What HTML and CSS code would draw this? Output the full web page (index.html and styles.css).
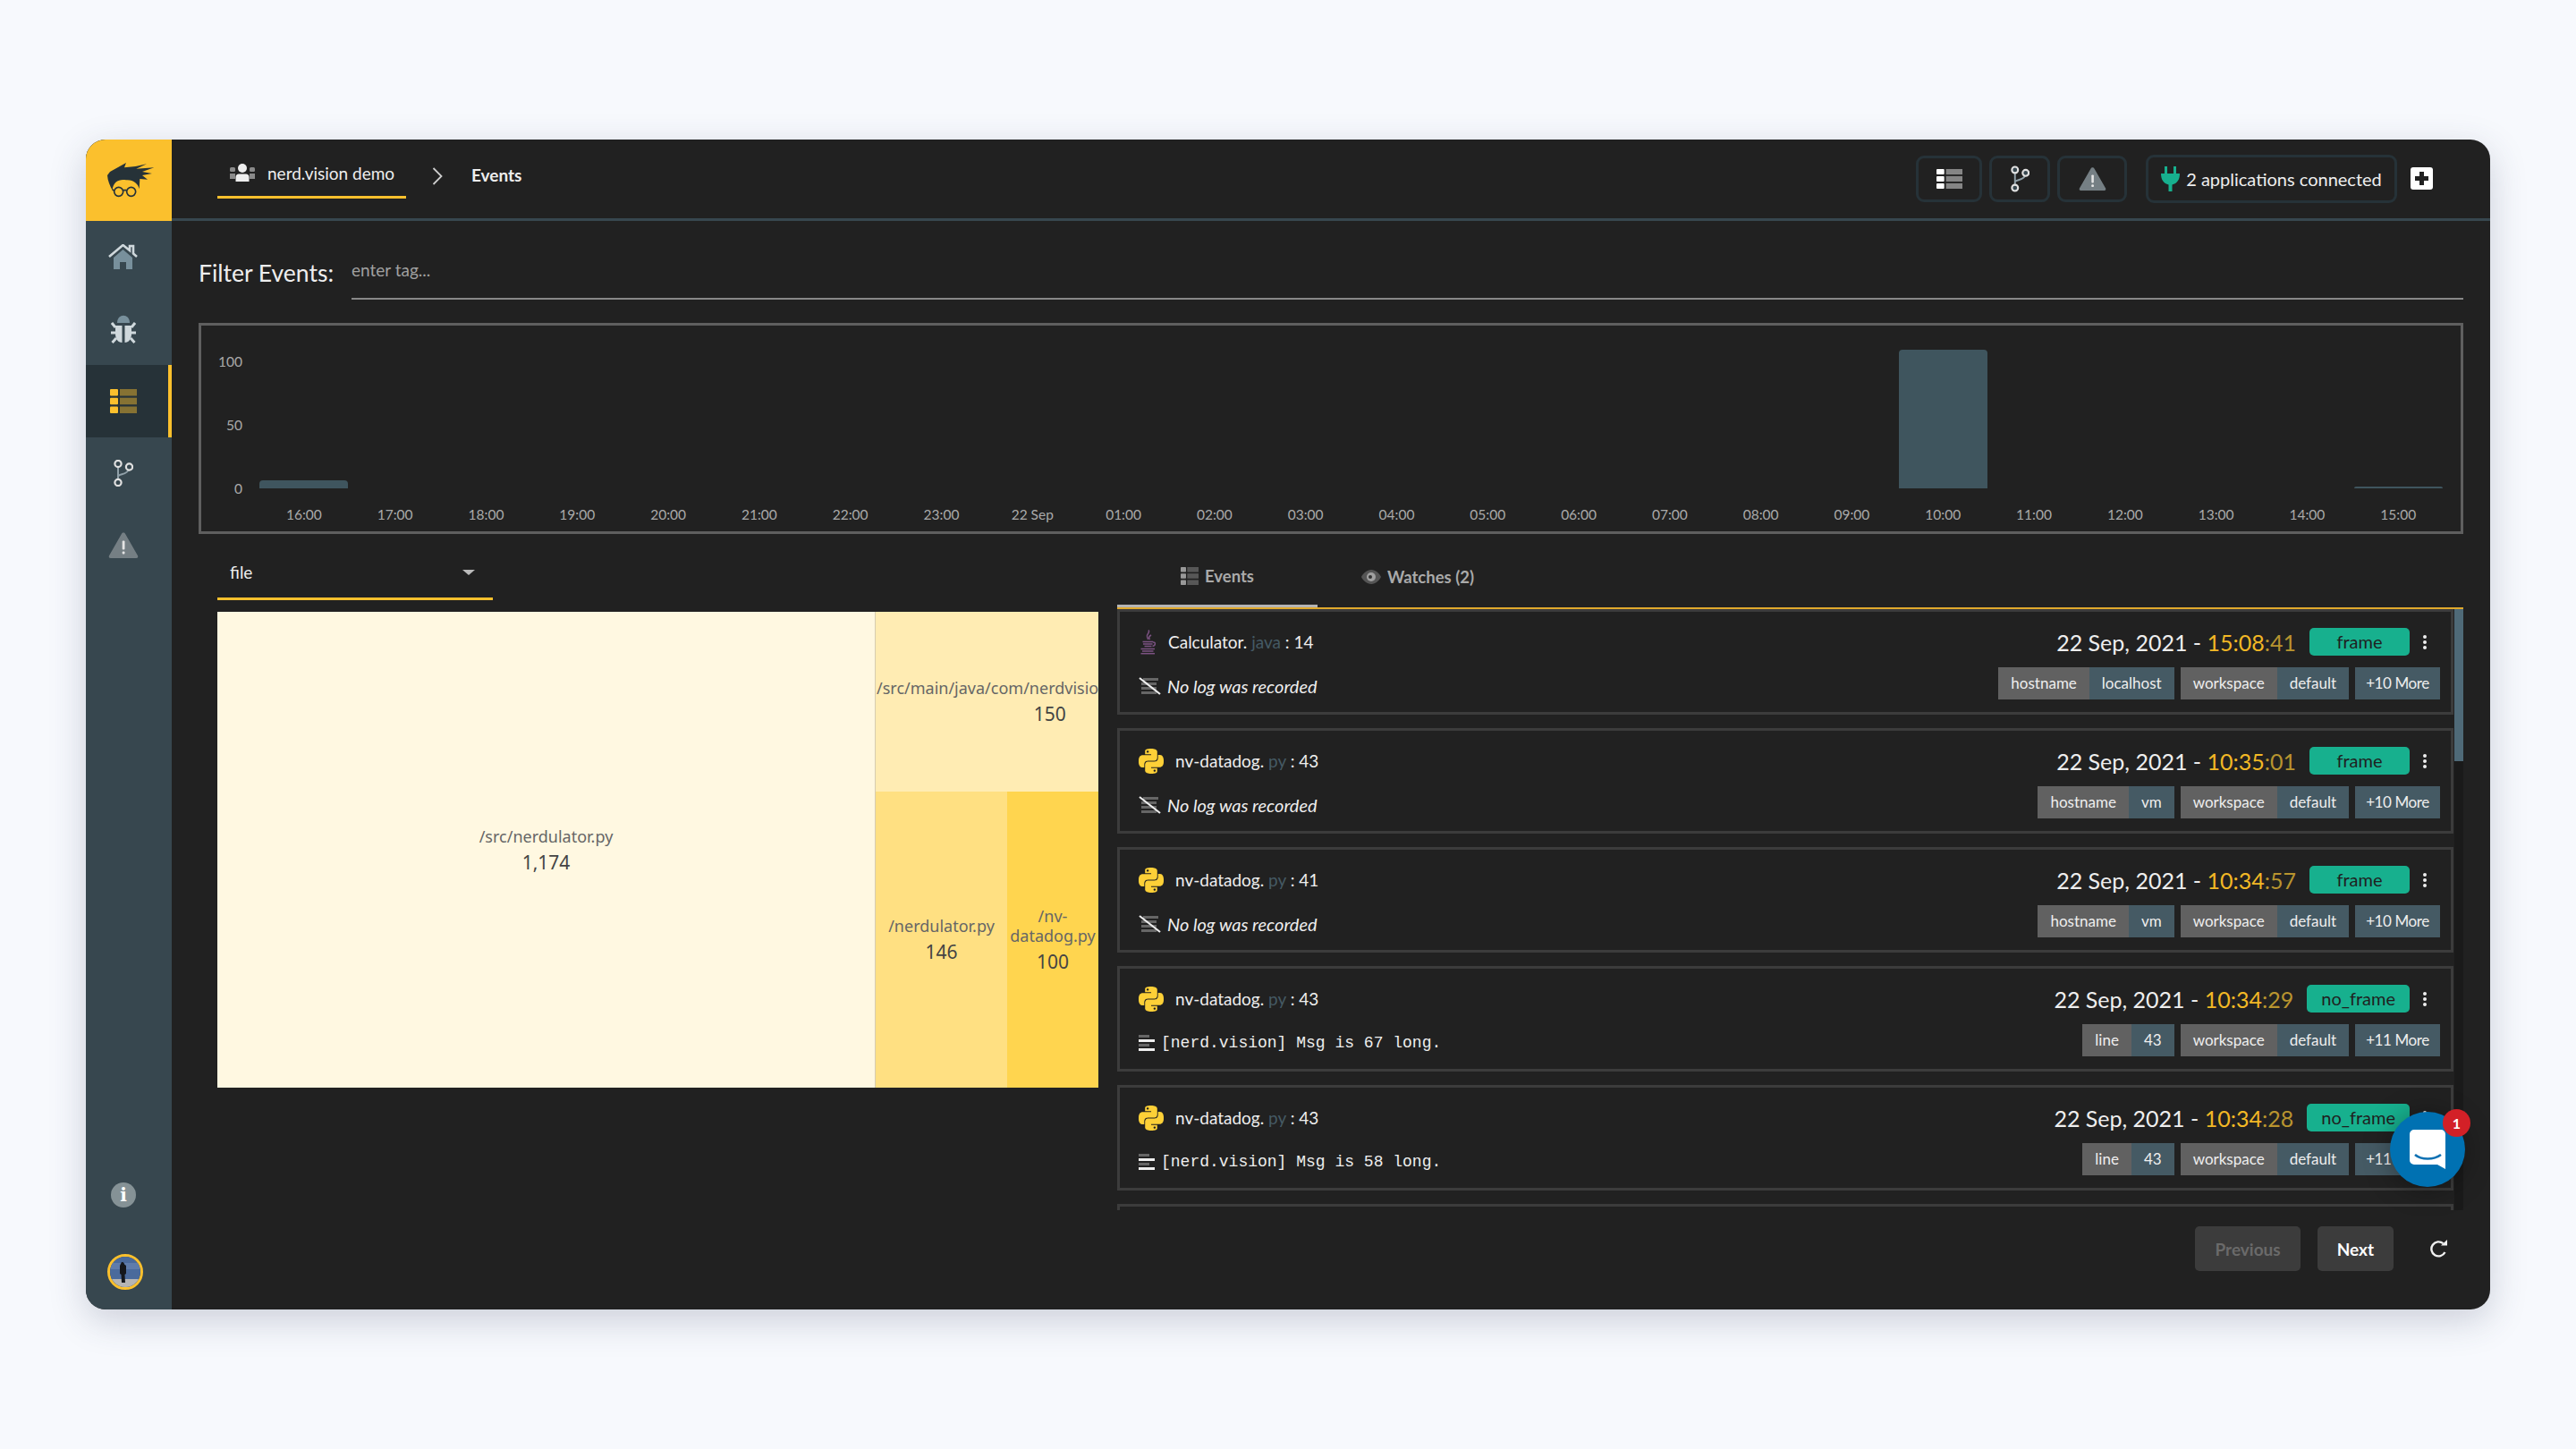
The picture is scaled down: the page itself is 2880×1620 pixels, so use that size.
FILE: index.html
```html
<!DOCTYPE html>
<html lang="en">
<head>
    <meta charset="UTF-8">
    <meta name="viewport" content="width=device-width, initial-scale=1.0">
    <title>nerd.vision - Events</title>
    <link rel="stylesheet" href="styles.css">
</head>
<body>
    <svg class="defs" width="0" height="0">
        <symbol id="i-python" viewBox="0 0 24 24">
            <path fill="#fdd037" d="M14.25.18l.9.2.73.26.59.3.45.32.34.34.25.34.16.33.1.3.04.26.02.2-.01.13V8.5l-.05.63-.13.55-.21.46-.26.38-.3.31-.33.25-.35.19-.35.14-.33.1-.3.07-.26.04-.21.02H8.77l-.69.05-.59.14-.5.22-.41.27-.33.32-.27.35-.2.36-.15.37-.1.35-.07.32-.04.27-.02.21v3.06H3.17l-.21-.03-.28-.07-.32-.12-.35-.18-.36-.26-.36-.36-.35-.46-.32-.59-.28-.73-.21-.88-.14-1.05-.05-1.23.06-1.22.16-1.04.24-.87.32-.71.36-.57.4-.44.42-.33.42-.24.4-.16.36-.1.32-.05.24-.01h.16l.06.01h8.16v-.83H6.18l-.01-2.75-.02-.37.05-.34.11-.31.17-.28.25-.26.31-.23.38-.2.44-.18.51-.15.58-.12.64-.1.71-.06.77-.04.84-.02 1.27.05zm-6.3 1.98l-.23.33-.08.41.08.41.23.34.33.22.41.09.41-.09.33-.22.23-.34.08-.41-.08-.41-.23-.33-.33-.22-.41-.09-.41.09zm13.09 3.95l.28.06.32.12.35.18.36.27.36.35.35.47.32.59.28.73.21.88.14 1.04.05 1.23-.06 1.23-.16 1.04-.24.86-.32.71-.36.57-.4.45-.42.33-.42.24-.4.16-.36.09-.32.05-.24.02-.16-.01h-8.22v.82h5.84l.01 2.76.02.36-.05.34-.11.31-.17.29-.25.25-.31.24-.38.2-.44.17-.51.15-.58.13-.64.09-.71.07-.77.04-.84.01-1.27-.04-1.07-.14-.9-.2-.73-.25-.59-.3-.45-.33-.34-.34-.25-.34-.16-.33-.1-.3-.04-.25-.02-.2.01-.13v-5.34l.05-.64.13-.54.21-.46.26-.38.3-.32.33-.24.35-.2.35-.14.33-.1.3-.06.26-.04.21-.02.13-.01h5.84l.69-.05.59-.14.5-.21.41-.28.33-.32.27-.35.2-.36.15-.36.1-.35.07-.32.04-.28.02-.21V6.07h2.09l.14.01zm-6.47 14.25l-.23.33-.08.41.08.41.23.33.33.23.41.08.41-.08.33-.23.23-.33.08-.41-.08-.41-.23-.33-.33-.23-.41-.08-.41.08z"/>
        </symbol>
        <symbol id="i-java" viewBox="0 0 21 28">
            <g fill="none" stroke="#7b5282" stroke-width="1.500">
                <path d="M11 .5c2.500 3-3 4.500-1.500 7.500.5 1 1 1.500 1 3"/>
                <path d="M14 6c-2.500 1.500-3 3-1.500 5"/>
                <path d="M4.500 13.500h11.500M5 16h10.500M6.500 18.500h8"/>
                <path d="M16 14c3-.5 3.500 3.500-.5 4.500"/>
                <path d="M2.500 21.500h15.500"/>
                <path d="M4 24h12.500"/>
                <path d="M2.500 26.700h15.500"/>
            </g>
        </symbol>
        <symbol id="i-nolog" viewBox="0 0 25 20">
            <g fill="#666">
                <rect x="5" y="1" width="17" height="3"/>
                <rect x="3" y="6" width="17" height="3"/>
                <rect x="3" y="11" width="17" height="3"/>
                <rect x="3" y="16" width="17" height="3"/>
            </g>
            <path d="M1 1l23 18" stroke="#eee" stroke-width="2.200"/>
        </symbol>
        <symbol id="i-log" viewBox="0 0 18 18">
            <rect y="0" width="12" height="3" fill="#666"/>
            <rect y="5" width="18" height="3" fill="#eee"/>
            <rect y="10" width="12" height="3" fill="#666"/>
            <rect y="15" width="18" height="3" fill="#eee"/>
        </symbol>
        <symbol id="i-table" viewBox="0 0 30 27">
            <rect width="9" height="7.500" rx="1"/>
            <rect y="9.700" width="9" height="7.500" rx="1"/>
            <rect y="19.500" width="9" height="7.500" rx="1"/>
            <g opacity=".45">
                <rect x="11" width="19" height="7.500"/>
                <rect x="11" y="9.700" width="19" height="7.500"/>
                <rect x="11" y="19.500" width="19" height="7.500"/>
            </g>
        </symbol>
        <symbol id="i-branch" viewBox="0 0 22 30">
            <path d="M5 6v18M5 19c0-4 11-1 12-9" fill="none" stroke="#90a0a8" stroke-width="2"/>
            <circle cx="5" cy="4.500" r="3.600" fill="#37474f" stroke="#e0e0e0" stroke-width="2.200"/>
            <circle cx="17.500" cy="8" r="3.600" fill="#37474f" stroke="#e0e0e0" stroke-width="2.200"/>
            <circle cx="5" cy="25.500" r="3.600" fill="#37474f" stroke="#e0e0e0" stroke-width="2.200"/>
        </symbol>
        <symbol id="i-warn" viewBox="0 0 34 30">
            <path d="M17 1.500c1 0 1.600.5 2 1.200l14 24.500c.7 1.300 0 2.800-1.600 2.800H2.600c-1.600 0-2.300-1.500-1.600-2.800l14-24.500c.4-.7 1-1.200 2-1.200z" fill="#757f84"/>
            <rect x="15.700" y="10.500" width="2.800" height="10" rx="1" fill="#e4e4e4"/>
            <rect x="15.700" y="22.500" width="2.800" height="3" rx="1" fill="#e4e4e4"/>
        </symbol>
    </svg>

    <div class="app">
        <!-- Sidebar -->
        <aside class="sidebar">
            <div class="logo">
                <svg width="70" height="60" viewBox="0 0 210 180">
                    <path fill="#263238" d="M33 72L42 60 96 30 90 46 128 42 165 34 130 50 190 46 150 60 183 66 150 72 168 86 142 84 140 118C136 100 120 86 96 88 72 84 52 94 50 122 42 108 34 90 33 72Z"/>
                    <g fill="none" stroke="#263238" stroke-width="5">
                        <circle cx="71" cy="127" r="15"/>
                        <circle cx="113" cy="127" r="15"/>
                        <path d="M86 122h12M50 120l7 4"/>
                    </g>
                </svg>
            </div>
            <nav class="side-nav">
                <a class="side-item">
                    <svg width="33" height="28" viewBox="0 0 33 28">
                        <path d="M6 15L16.500 6 27 15v13h-7v-8h-7v8H6z" fill="#78909c"/>
                        <path d="M1 14L16.500 1 24 7V2h4v8.500L32 14" fill="none" stroke="#cfd8dc" stroke-width="2.600"/>
                    </svg>
                </a>
                <a class="side-item">
                    <svg width="28" height="34" viewBox="0 0 28 34">
                        <path d="M7 10c0-11 14-11 14 0z" fill="#78909c"/>
                        <path d="M5 13h7.500v19C8 32 5 28 5 22zM15.500 13H23v9c0 6-3 10-7.500 10z" fill="#cfd8dc"/>
                        <path d="M5 15L1 10M5 21H0M6 27L1.500 32M23 15l4-5M23 21h5M22 27l4.500 5" stroke="#cfd8dc" stroke-width="3" fill="none"/>
                    </svg>
                </a>
                <a class="side-item active">
                    <svg class="icon-amber" width="30" height="27"><use href="#i-table"/></svg>
                </a>
                <a class="side-item">
                    <svg width="22" height="30"><use href="#i-branch"/></svg>
                </a>
                <a class="side-item">
                    <svg width="34" height="30"><use href="#i-warn"/></svg>
                </a>
            </nav>
            <div class="side-bottom">
                <div class="info-dot">i</div>
                <div class="avatar">
                    <svg width="34" height="34" viewBox="0 0 34 34">
                        <rect width="34" height="34" fill="#4a6a9c"/>
                        <rect y="7" width="34" height="7" fill="#5f7cab"/>
                        <rect y="25" width="34" height="9" fill="#b5b5b5"/>
                        <path d="M13 6a2.500 2.500 0 0 1 3 2.500l2 1.500v9l-1.500 1 .5 9h-4l-.5-9L11 19v-9z" fill="#14171c"/>
                    </svg>
                </div>
            </div>
        </aside>

        <div class="main">
            <!-- Header -->
            <header class="topbar">
                <div class="crumbs">
                    <a class="crumb-org">
                        <svg width="28" height="20" viewBox="0 0 28 20">
                            <g fill="#8a8a8a">
                                <rect x="0" y="4" width="6" height="5" rx="1.500"/>
                                <rect x="22" y="4" width="6" height="5" rx="1.500"/>
                                <path d="M0 11h6v6H0zM22 11h6v6h-6z"/>
                            </g>
                            <circle cx="14" cy="5" r="5" fill="#eee"/>
                            <path d="M6.500 20v-5c0-2 1.500-3.500 3.500-3.500h8c2 0 3.500 1.500 3.500 3.500v5z" fill="#eee"/>
                        </svg>
                        <span>nerd.vision demo</span>
                    </a>
                    <svg class="crumb-sep" width="12" height="20" viewBox="0 0 12 20">
                        <path d="M1.500 1l9 9-9 9" fill="none" stroke="#ccc" stroke-width="1.800"/>
                    </svg>
                    <span class="crumb-page">Events</span>
                </div>
                <div class="top-actions">
                    <a class="top-btn btn-list"><svg class="icon-white" width="29" height="22" viewBox="0 0 30 27" preserveAspectRatio="none"><use href="#i-table"/></svg></a>
                    <a class="top-btn btn-branch"><svg width="21" height="30"><use href="#i-branch"/></svg></a>
                    <a class="top-btn btn-warn"><svg width="31" height="29" viewBox="0 0 34 30"><use href="#i-warn"/></svg></a>
                    <a class="top-btn btn-apps">
                        <svg width="21" height="28" viewBox="0 0 21 28">
                            <path d="M4 0h3v8H4zM14 0h3v8h-3zM0 8h21c0 7-3 11-8.500 12.500V28h-4v-7.500C3 19 0 15 0 8z" fill="#17b08e"/>
                        </svg>
                        <span>2 applications connected</span>
                    </a>
                    <a class="add-btn">
                        <svg width="25" height="25" viewBox="0 0 25 25">
                            <rect width="25" height="25" rx="3" fill="#fff"/>
                            <path d="M10 5h5v5h5v5h-5v5h-5v-5H5v-5h5z" fill="#212121"/>
                        </svg>
                    </a>
                </div>
            </header>

            <div class="content">
                <!-- Filter -->
                <div class="filter">
                    <label>Filter Events:</label>
                    <div class="filter-input">enter tag...</div>
                </div>

                <!-- Chart -->
                <div class="chart">
                    <div class="y-axis">
                        <span>100</span>
                        <span>50</span>
                        <span>0</span>
                    </div>
                    <div class="plot">
                        <div class="col"><div class="slot"><div class="bar" style="height: 9px"></div></div><span>16:00</span></div>
                        <div class="col"><div class="slot"></div><span>17:00</span></div>
                        <div class="col"><div class="slot"></div><span>18:00</span></div>
                        <div class="col"><div class="slot"></div><span>19:00</span></div>
                        <div class="col"><div class="slot"></div><span>20:00</span></div>
                        <div class="col"><div class="slot"></div><span>21:00</span></div>
                        <div class="col"><div class="slot"></div><span>22:00</span></div>
                        <div class="col"><div class="slot"></div><span>23:00</span></div>
                        <div class="col"><div class="slot"></div><span>22 Sep</span></div>
                        <div class="col"><div class="slot"></div><span>01:00</span></div>
                        <div class="col"><div class="slot"></div><span>02:00</span></div>
                        <div class="col"><div class="slot"></div><span>03:00</span></div>
                        <div class="col"><div class="slot"></div><span>04:00</span></div>
                        <div class="col"><div class="slot"></div><span>05:00</span></div>
                        <div class="col"><div class="slot"></div><span>06:00</span></div>
                        <div class="col"><div class="slot"></div><span>07:00</span></div>
                        <div class="col"><div class="slot"></div><span>08:00</span></div>
                        <div class="col"><div class="slot"></div><span>09:00</span></div>
                        <div class="col"><div class="slot"><div class="bar" style="height: 155px"></div></div><span>10:00</span></div>
                        <div class="col"><div class="slot"></div><span>11:00</span></div>
                        <div class="col"><div class="slot"></div><span>12:00</span></div>
                        <div class="col"><div class="slot"></div><span>13:00</span></div>
                        <div class="col"><div class="slot"></div><span>14:00</span></div>
                        <div class="col"><div class="slot"><div class="bar" style="height: 2px"></div></div><span>15:00</span></div>
                    </div>
                </div>

                <div class="lower">
                    <!-- Treemap -->
                    <section class="left">
                        <div class="select">
                            <span>file</span>
                            <i class="caret"></i>
                        </div>
                        <div class="treemap">
                            <div class="cell c1"><div><p>/src/nerdulator.py</p><b>1,174</b></div></div>
                            <div class="cell c2"><div><p>/src/main/java/com/nerdvision/Calculator.java</p><b>150</b></div></div>
                            <div class="cell c3"><div><p>/nerdulator.py</p><b>146</b></div></div>
                            <div class="cell c4"><div><p>/nv-datadog.py</p><b>100</b></div></div>
                        </div>
                    </section>

                    <!-- Events list -->
                    <section class="right">
                        <div class="tabs">
                            <a class="tab active">
                                <svg class="icon-grey" width="20" height="20" viewBox="0 0 30 27" preserveAspectRatio="none"><use href="#i-table"/></svg>
                                Events
                            </a>
                            <a class="tab">
                                <svg width="22" height="18" viewBox="0 0 22 18">
                                    <path d="M11 1c5 0 9 4 11 8-2 4-6 8-11 8S2 13 0 9c2-4 6-8 11-8z" fill="#555"/>
                                    <circle cx="11" cy="9" r="5" fill="#a0a0a0"/>
                                    <circle cx="10" cy="9" r="2" fill="#333"/>
                                </svg>
                                Watches (2)
                            </a>
                        </div>

                        <div class="list-wrap">
                            <div class="list">
                                <article class="card">
                                    <div class="card-row">
                                        <div class="file file-java">
                                            <svg width="21" height="28"><use href="#i-java"/></svg>
                                            <span>Calculator. <em>java</em> : 14</span>
                                        </div>
                                        <div class="meta">
                                            <span class="date">22 Sep, 2021 - <span class="time">15:08<span class="sec">:41</span></span></span>
                                            <span class="badge">frame</span>
                                            <span class="dots"><i></i><i></i><i></i></span>
                                        </div>
                                    </div>
                                    <div class="card-row row-two">
                                        <div class="log log-none">
                                            <svg width="25" height="20"><use href="#i-nolog"/></svg>
                                            <span>No log was recorded</span>
                                        </div>
                                        <div class="tags">
                                            <span class="tag"><span class="tag-k">hostname</span><span class="tag-v">localhost</span></span>
                                            <span class="tag"><span class="tag-k">workspace</span><span class="tag-v">default</span></span>
                                            <span class="tag"><span class="tag-v tag-more">+10 More</span></span>
                                        </div>
                                    </div>
                                </article>

                                <article class="card">
                                    <div class="card-row">
                                        <div class="file">
                                            <svg width="28" height="28"><use href="#i-python"/></svg>
                                            <span>nv-datadog. <em>py</em> : 43</span>
                                        </div>
                                        <div class="meta">
                                            <span class="date">22 Sep, 2021 - <span class="time">10:35<span class="sec">:01</span></span></span>
                                            <span class="badge">frame</span>
                                            <span class="dots"><i></i><i></i><i></i></span>
                                        </div>
                                    </div>
                                    <div class="card-row row-two">
                                        <div class="log log-none">
                                            <svg width="25" height="20"><use href="#i-nolog"/></svg>
                                            <span>No log was recorded</span>
                                        </div>
                                        <div class="tags">
                                            <span class="tag"><span class="tag-k">hostname</span><span class="tag-v">vm</span></span>
                                            <span class="tag"><span class="tag-k">workspace</span><span class="tag-v">default</span></span>
                                            <span class="tag"><span class="tag-v tag-more">+10 More</span></span>
                                        </div>
                                    </div>
                                </article>

                                <article class="card">
                                    <div class="card-row">
                                        <div class="file">
                                            <svg width="28" height="28"><use href="#i-python"/></svg>
                                            <span>nv-datadog. <em>py</em> : 41</span>
                                        </div>
                                        <div class="meta">
                                            <span class="date">22 Sep, 2021 - <span class="time">10:34<span class="sec">:57</span></span></span>
                                            <span class="badge">frame</span>
                                            <span class="dots"><i></i><i></i><i></i></span>
                                        </div>
                                    </div>
                                    <div class="card-row row-two">
                                        <div class="log log-none">
                                            <svg width="25" height="20"><use href="#i-nolog"/></svg>
                                            <span>No log was recorded</span>
                                        </div>
                                        <div class="tags">
                                            <span class="tag"><span class="tag-k">hostname</span><span class="tag-v">vm</span></span>
                                            <span class="tag"><span class="tag-k">workspace</span><span class="tag-v">default</span></span>
                                            <span class="tag"><span class="tag-v tag-more">+10 More</span></span>
                                        </div>
                                    </div>
                                </article>

                                <article class="card">
                                    <div class="card-row">
                                        <div class="file">
                                            <svg width="28" height="28"><use href="#i-python"/></svg>
                                            <span>nv-datadog. <em>py</em> : 43</span>
                                        </div>
                                        <div class="meta">
                                            <span class="date">22 Sep, 2021 - <span class="time">10:34<span class="sec">:29</span></span></span>
                                            <span class="badge">no_frame</span>
                                            <span class="dots"><i></i><i></i><i></i></span>
                                        </div>
                                    </div>
                                    <div class="card-row row-two">
                                        <div class="log">
                                            <svg width="18" height="18"><use href="#i-log"/></svg>
                                            <code>[nerd.vision] Msg is 67 long.</code>
                                        </div>
                                        <div class="tags">
                                            <span class="tag"><span class="tag-k">line</span><span class="tag-v">43</span></span>
                                            <span class="tag"><span class="tag-k">workspace</span><span class="tag-v">default</span></span>
                                            <span class="tag"><span class="tag-v tag-more">+11 More</span></span>
                                        </div>
                                    </div>
                                </article>

                                <article class="card">
                                    <div class="card-row">
                                        <div class="file">
                                            <svg width="28" height="28"><use href="#i-python"/></svg>
                                            <span>nv-datadog. <em>py</em> : 43</span>
                                        </div>
                                        <div class="meta">
                                            <span class="date">22 Sep, 2021 - <span class="time">10:34<span class="sec">:28</span></span></span>
                                            <span class="badge">no_frame</span>
                                            <span class="dots"><i></i><i></i><i></i></span>
                                        </div>
                                    </div>
                                    <div class="card-row row-two">
                                        <div class="log">
                                            <svg width="18" height="18"><use href="#i-log"/></svg>
                                            <code>[nerd.vision] Msg is 58 long.</code>
                                        </div>
                                        <div class="tags">
                                            <span class="tag"><span class="tag-k">line</span><span class="tag-v">43</span></span>
                                            <span class="tag"><span class="tag-k">workspace</span><span class="tag-v">default</span></span>
                                            <span class="tag"><span class="tag-v tag-more">+11 More</span></span>
                                        </div>
                                    </div>
                                </article>

                                <article class="card"></article>
                            </div>
                            <div class="scrollbar"><div class="thumb"></div></div>
                        </div>

                        <div class="pager">
                            <button type="button" class="page-btn" disabled>Previous</button>
                            <button type="button" class="page-btn">Next</button>
                            <svg class="refresh" width="20" height="20" viewBox="0 0 20 20">
                                <path d="M14.500 4.200A8 8 0 1 0 16.500 14" fill="none" stroke="#f0f0f0" stroke-width="2.400"/>
                                <path d="M12 6.500h7V0z" fill="#f0f0f0"/>
                            </svg>
                        </div>
                    </section>
                </div>
            </div>
        </div>

        <!-- Chat widget -->
        <div class="chat">
            <svg width="40" height="44" viewBox="0 0 40 44">
                <path d="M5 0h30a5 5 0 0 1 5 5v39l-9-5H5a5 5 0 0 1-5-5V5a5 5 0 0 1 5-5z" fill="#fff"/>
                <path d="M6 28c7 6 21 6 29 0" fill="none" stroke="#0f71b3" stroke-width="2.600"/>
            </svg>
            <span class="chat-count">1</span>
        </div>
    </div>
</body>
</html>
```

FILE: styles.css
```css
* {
    box-sizing: border-box;
}

body {
    margin: 0;
    height: 1620px;
    display: flex;
    align-items: center;
    justify-content: center;
    background-color: #f7f9fd;
    color: #eee;
    font-family: "Lato", "Noto Sans", sans-serif;
    font-size: 18px;
}

p {
    margin: 0;
}

.defs {
    position: absolute;
}

.app {
    position: relative;
    width: 2688px;
    height: 1308px;
    display: flex;
    border-radius: 22px;
    overflow: hidden;
    background-color: #212121;
    box-shadow: 0 12px 40px rgba(50, 60, 90, 0.22);
}

/* Sidebar */
.sidebar {
    width: 96px;
    flex-shrink: 0;
    display: flex;
    flex-direction: column;
    background-color: #37474f;
}

.logo {
    height: 91px;
    display: flex;
    align-items: center;
    justify-content: center;
    background-color: #fbc02d;
}

.side-item {
    height: 80.5px;
    display: flex;
    align-items: center;
    justify-content: center;
    padding-right: 13px;
}

.side-item.active {
    background-color: #263238;
    border-right: 4px solid #fbc02d;
    padding-right: 9px;
}

.icon-amber {
    fill: #fbc02d;
}

.icon-white {
    fill: #fff;
}

.icon-grey {
    fill: #999;
}

.side-bottom {
    margin-top: auto;
    padding: 0 0 22px 24px;
    display: flex;
    flex-direction: column;
}

.info-dot {
    width: 28px;
    height: 28px;
    margin-left: 4px;
    margin-bottom: 52px;
    border-radius: 50%;
    background-color: #859296;
    color: #fff;
    font-family: "DejaVu Serif", serif;
    font-weight: bold;
    font-size: 20px;
    line-height: 28px;
    text-align: center;
}

.avatar {
    width: 40px;
    height: 40px;
    border: 3px solid #fbc02d;
    border-radius: 50%;
    overflow: hidden;
}

.avatar svg {
    display: block;
}

/* Header */
.main {
    flex: 1;
    min-width: 0;
}

.topbar {
    height: 91px;
    display: flex;
    justify-content: space-between;
    padding: 0 64px 0 51px;
    border-bottom: 3px solid #37474f;
}

.crumbs {
    display: flex;
    align-items: flex-start;
}

.crumb-org {
    width: 211px;
    height: 66px;
    display: flex;
    align-items: center;
    gap: 14px;
    padding: 12px 0 0 14px;
    border-bottom: 3px solid #fbc02d;
    font-size: 19px;
}

.crumb-org svg {
    margin-top: -2px;
}

.crumb-sep {
    margin: 31px 0 0 29px;
}

.crumb-page {
    margin: 28px 0 0 32px;
    font-size: 19px;
    font-weight: bold;
}

.top-actions {
    display: flex;
    align-items: center;
    padding-bottom: 1px;
}

.top-btn {
    height: 52px;
    display: flex;
    align-items: center;
    justify-content: center;
    border: 3px solid #263238;
    border-radius: 9px;
}

.btn-list {
    width: 74px;
}

.btn-branch {
    width: 68px;
    margin-left: 8px;
}

.btn-warn {
    width: 78px;
    margin-left: 8px;
}

.btn-apps {
    width: 281px;
    height: 54px;
    margin-left: 21px;
    gap: 7px;
    font-size: 20px;
}

.add-btn {
    display: flex;
    margin-left: 15px;
}

/* Filter */
.content {
    padding: 0 30px;
}

.filter {
    height: 114px;
    display: flex;
    align-items: flex-start;
}

.filter label {
    width: 171px;
    padding-top: 41px;
    font-size: 26.5px;
    line-height: 34px;
}

.filter-input {
    flex: 1;
    height: 88px;
    padding-top: 43px;
    border-bottom: 2px solid #888;
    color: #a0a0a0;
    font-size: 19px;
    line-height: 24px;
}

/* Chart */
.chart {
    height: 236px;
    display: flex;
    border: 3px solid #5f5f5f;
    color: #aaa;
    font-size: 15.5px;
}

.y-axis {
    width: 64px;
    height: 192px;
    padding: 30px 18px 0 0;
    display: flex;
    flex-direction: column;
    justify-content: space-between;
    text-align: right;
    line-height: 20px;
}

.plot {
    width: 2443px;
    display: flex;
}

.col {
    flex: 1;
    text-align: center;
    line-height: 20px;
}

.slot {
    height: 182px;
    margin-bottom: 19px;
    display: flex;
    align-items: flex-end;
    justify-content: center;
}

.bar {
    width: 99px;
    background-color: #3f555e;
    border-radius: 4px 4px 0 0;
}

/* Lower part */
.lower {
    display: flex;
    gap: 21px;
    margin: 17px 0 0 21px;
}

.left {
    width: 985px;
    flex-shrink: 0;
}

.right {
    flex: 1;
    min-width: 0;
}

.select {
    width: 308px;
    height: 57px;
    display: flex;
    align-items: center;
    justify-content: space-between;
    padding: 0 20px 3px 14px;
    border-bottom: 3px solid #fbc02d;
    font-size: 19px;
}

.caret {
    border-left: 7px solid transparent;
    border-right: 7px solid transparent;
    border-top: 6px solid #bbb;
}

.treemap {
    height: 532px;
    margin-top: 13px;
    display: grid;
    grid-template-columns: 736px 147px 102px;
    grid-template-rows: 201px 331px;
    color: #444;
    font-family: "Noto Sans", sans-serif;
}

.cell {
    display: flex;
    align-items: center;
    justify-content: center;
    overflow: hidden;
    text-align: center;
}

.cell p {
    font-size: 18px;
    line-height: 22px;
    color: #666;
}

.cell b {
    display: block;
    margin-top: 5px;
    font-size: 21px;
    font-weight: normal;
    line-height: 26px;
}

.c1 {
    grid-row: 1 / 3;
    background-color: #fff8e1;
    border-right: 1px solid #d6ccb0;
}

.c2 {
    grid-column: 2 / 4;
    justify-content: flex-start;
    padding-left: 1px;
    background-color: #ffecb3;
    white-space: nowrap;
}

.c3 {
    background-color: #ffe082;
}

.c4 {
    background-color: #ffd54f;
}

/* Tabs */
.tabs {
    height: 67px;
    display: flex;
    border-bottom: 2px solid #e0a92c;
}

.tab {
    width: 224px;
    height: 65px;
    display: flex;
    align-items: center;
    justify-content: center;
    gap: 7px;
    padding-bottom: 3px;
    color: #aaa;
    font-size: 18.5px;
    font-weight: bold;
}

.tab.active {
    border-bottom: 3px solid #b4b4b4;
    padding-top: 1px;
}

/* Events list */
.list-wrap {
    height: 672px;
    display: flex;
    overflow: hidden;
}

.list {
    flex: 1;
    min-width: 0;
}

.scrollbar {
    width: 10px;
    margin-left: 1px;
    background-color: #1a1a1a;
}

.thumb {
    height: 170px;
    background-color: #4f6a78;
}

.card {
    height: 118px;
    margin-bottom: 15px;
    padding: 18px 12px 0 21px;
    border: 3px solid #3c3c3c;
}

.card-row {
    height: 31px;
    display: flex;
    align-items: center;
    justify-content: space-between;
}

.row-two {
    height: 36px;
    margin-top: 13px;
}

.file {
    display: flex;
    align-items: center;
    gap: 13px;
    font-size: 19px;
}

.file-java {
    gap: 12px;
}

.file em {
    font-style: normal;
    color: #455a64;
}

.log {
    display: flex;
    align-items: center;
    gap: 7px;
    padding-top: 5px;
}

.log span {
    font-style: italic;
    font-size: 20px;
}

.log code {
    font-family: "Liberation Mono", monospace;
    font-size: 18px;
}

.meta {
    display: flex;
    align-items: center;
}

.date {
    margin-right: 15px;
    font-size: 25px;
}

.time {
    color: #f2b825;
}

.sec {
    color: #b8942f;
}

.badge {
    min-width: 112px;
    height: 31px;
    padding: 0 16px;
    border-radius: 5px;
    background-color: #17b08e;
    color: #1f1f1f;
    font-size: 20px;
    line-height: 31px;
    text-align: center;
}

.dots {
    width: 34px;
    display: flex;
    flex-direction: column;
    align-items: center;
    gap: 2px;
}

.dots i {
    width: 4px;
    height: 4px;
    border-radius: 50%;
    background-color: #eee;
}

.tags {
    display: flex;
    gap: 7px;
}

.tag {
    display: flex;
    font-size: 17px;
    line-height: 36px;
}

.tag-k {
    padding: 0 14px;
    background-color: #616161;
}

.tag-v {
    padding: 0 14px;
    background-color: #455a64;
}

.tag-more {
    width: 95px;
    padding: 0;
    text-align: center;
    letter-spacing: -0.4px;
}

/* Pagination */
.pager {
    display: flex;
    align-items: center;
    justify-content: flex-end;
    margin-top: 18px;
    padding-right: 17px;
}

.page-btn {
    height: 50px;
    padding: 0 22px;
    margin-right: 19px;
    border: none;
    border-radius: 5px;
    background-color: #3c3c3c;
    color: #fff;
    font-family: inherit;
    font-size: 19px;
    font-weight: bold;
}

.page-btn:disabled {
    color: #6a6a6a;
}

.refresh {
    margin-left: 22px;
}

/* Chat widget */
.chat {
    position: absolute;
    left: 2576px;
    top: 1087px;
    width: 84px;
    height: 84px;
    display: flex;
    align-items: center;
    justify-content: center;
    border-radius: 50%;
    background-color: #0071b2;
    box-shadow: 0 2px 30px rgba(0, 0, 0, 0.35);
}

.chat-count {
    position: absolute;
    top: -3px;
    right: -6px;
    width: 31px;
    height: 31px;
    border-radius: 50%;
    background-color: #d32027;
    color: #fff;
    font-size: 16px;
    font-weight: bold;
    line-height: 31px;
    text-align: center;
}
```
